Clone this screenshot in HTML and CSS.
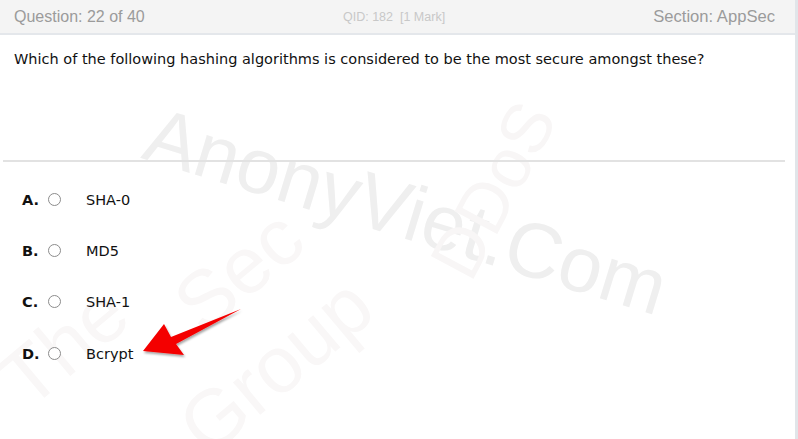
FILE: index.html
```html
<!DOCTYPE html>
<html>
<head>
<meta charset="utf-8">
<link rel="stylesheet" href="styles.css">
</head>
<body>
<div class="page">
  <div class="watermark wm-main">AnonyViet.Com</div>
  <div class="watermark wm-ddos">DDoS</div>
  <div class="watermark wm-sec">Sec</div>
  <div class="watermark wm-group">Group</div>
  <div class="watermark wm-the">The</div>
  <header class="bar">
    <span class="q-num">Question: 22 of 40</span>
    <span class="qid">QID: 182&nbsp; [1 Mark]</span>
    <span class="section">Section: AppSec</span>
  </header>
  <div class="question">Which of the following hashing algorithms is considered to be the most secure amongst these?</div>
  <hr class="divider">
  <ul class="options">
    <li class="option"><span class="letter">A.</span><span class="radio"></span><span class="label">SHA-0</span></li>
    <li class="option"><span class="letter">B.</span><span class="radio"></span><span class="label">MD5</span></li>
    <li class="option"><span class="letter">C.</span><span class="radio"></span><span class="label">SHA-1</span></li>
    <li class="option"><span class="letter">D.</span><span class="radio"></span><span class="label">Bcrypt</span></li>
  </ul>
  <svg class="arrow" width="120" height="70" viewBox="0 0 120 70">
    <defs>
      <filter id="sh" x="-20%" y="-20%" width="140%" height="140%">
        <feDropShadow dx="1" dy="2" stdDeviation="1.2" flood-color="#000" flood-opacity="0.35"/>
      </filter>
    </defs>
    <polygon points="3,47 24,20 31,33 101,5 36,40 44,51" fill="#f40000" filter="url(#sh)"/>
  </svg>
</div>
</body>
</html>
```
FILE: styles.css
```css
html, body {
  margin: 0;
  padding: 0;
  background: #fff;
}
.page {
  position: relative;
  width: 795px;
  height: 439px;
  border-right: 3px solid #e1e5e9;
  overflow: hidden;
  font-family: "DejaVu Sans", Verdana, sans-serif;
}
.bar {
  position: relative;
  z-index: 1;
  height: 33px;
  background: #f4f4f4;
  border-bottom: 2px solid #e4e7eb;
  display: flex;
  align-items: center;
  padding: 0 20px 0 14px;
  font-family: "Liberation Sans", Arial, sans-serif;
  color: #9b9b9b;
}
.q-num {
  font-size: 16px;
  width: 329px;
}
.qid {
  font-size: 12.5px;
  color: #c8c8c8;
  flex: 1;
}
.section {
  font-size: 16.6px;
}
.question {
  position: relative;
  z-index: 1;
  padding: 16px 0 0 14px;
  font-size: 14.5px;
  color: #111;
  height: 109px;
}
.divider {
  position: relative;
  z-index: 1;
  margin: 0 10px 0 3px;
  border: 0;
  border-top: 2px solid #e2e2e2;
  height: 0;
}
.options {
  position: relative;
  z-index: 1;
  list-style: none;
  margin: 0;
  padding: 12px 0 0 22px;
}
.option {
  display: flex;
  align-items: center;
  height: 51px;
  font-size: 14.5px;
  color: #111;
}
.option:last-child {
  height: 53px;
}
.letter {
  font-weight: bold;
  width: 26px;
}
.radio {
  width: 13px;
  height: 13px;
  border: 1px solid #8c8c8c;
  border-radius: 50%;
  box-sizing: border-box;
  margin-right: 25px;
  background: #fff;
}
.watermark {
  position: absolute;
  font-family: "Liberation Sans", Arial, sans-serif;
  white-space: nowrap;
  z-index: 0;
  transform-origin: center;
}
.wm-main {
  font-size: 78px;
  color: #efefef;
  left: 136px;
  top: 166px;
  transform: rotate(17deg);
}
.wm-ddos {
  font-size: 70px;
  color: #f8f6f6;
  left: 400px;
  top: 150px;
  transform: rotate(-62deg);
}
.wm-sec {
  font-size: 80px;
  color: #f9f7f7;
  left: 170px;
  top: 225px;
  transform: rotate(-40deg);
}
.wm-group {
  font-size: 80px;
  color: #f9f7f7;
  left: 165px;
  top: 320px;
  transform: rotate(-40deg);
}
.wm-the {
  font-size: 80px;
  color: #f9f7f7;
  left: -5px;
  top: 300px;
  transform: rotate(-40deg);
}
.arrow {
  position: absolute;
  left: 140px;
  top: 304px;
  z-index: 2;
}
```
